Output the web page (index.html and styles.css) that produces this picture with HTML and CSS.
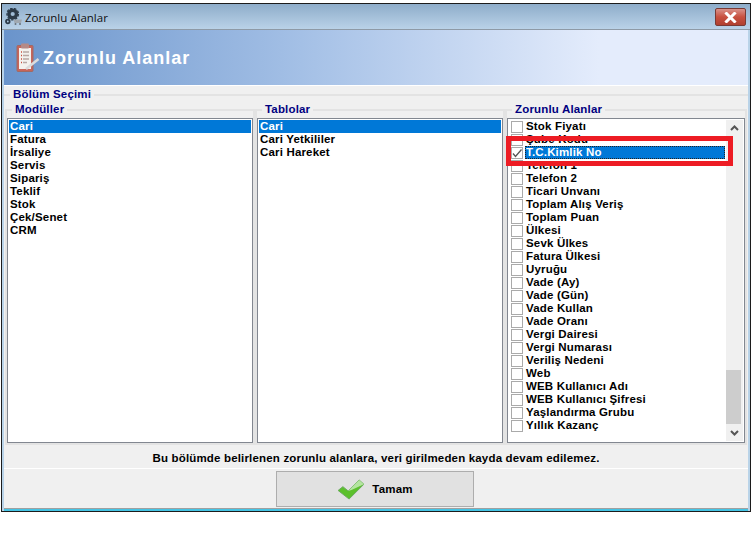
FILE: index.html
```html
<!DOCTYPE html>
<html lang="tr">
<head>
    <meta charset="UTF-8">
    <title>Zorunlu Alanlar</title>
    <link rel="stylesheet" href="styles.css">
</head>
<body>
    <div class="window">
        <div class="titlebar">
            <svg class="app-icon" width="19" height="19" viewBox="0 0 19 19">
                <circle cx="8.700" cy="6" r="3.800" fill="none" stroke="#2c3a48" stroke-width="3.400"/>
                <circle cx="8.700" cy="6" r="5.800" fill="none" stroke="#2c3a48" stroke-width="1.200" stroke-dasharray="2.500 1.500"/>
                <circle cx="3.800" cy="13.500" r="1.800" fill="none" stroke="#2c3a48" stroke-width="1.800"/>
                <path d="M9.500 11.500 H18 L17 15 H10.500 Z" fill="#a0a8b0"/>
                <circle cx="11.500" cy="16" r="1" fill="#68727c"/>
                <circle cx="16" cy="16" r="1" fill="#68727c"/>
            </svg>
            <span class="title-text">Zorunlu Alanlar</span>
            <div class="close-btn">
                <svg width="15" height="11" viewBox="0 0 15 11">
                    <path d="M3.500 1.500 L11.500 9.500 M11.500 1.500 L3.500 9.500" stroke="#fff" stroke-width="3" stroke-linecap="square"/>
                </svg>
            </div>
        </div>
        <div class="banner">
            <svg class="banner-icon" width="24" height="30" viewBox="0 0 24 30">
                <rect x="1" y="2.500" width="16" height="26" rx="1" fill="#c8655a" stroke="#a06a64"/>
                <rect x="3" y="5" width="12" height="21" fill="#f4f2ee"/>
                <rect x="5" y="0.500" width="8" height="5" rx="1" fill="#b58a86"/>
                <path d="M7 9 H13 M7 12.500 H13 M7 16 H13 M7 19.500 H11" stroke="#b8a8a4" stroke-width="1.300"/>
                <path d="M5 9 H6 M5 12.500 H6 M5 16 H6 M5 19.500 H6" stroke="#c8503f" stroke-width="1.300"/>
                <path d="M10 26 L22.500 16" stroke="#dcdcdc" stroke-width="2.600"/>
            </svg>
            <h1>Zorunlu Alanlar</h1>
        </div>
        <div class="content">
            <fieldset class="group outer">
                <legend>Bölüm Seçimi</legend>
                <div class="columns">
                    <fieldset class="group col">
                        <legend>Modüller</legend>
                        <ul class="list">
                            <li class="selected">Cari</li>
                            <li>Fatura</li>
                            <li>İrsaliye</li>
                            <li>Servis</li>
                            <li>Sipariş</li>
                            <li>Teklif</li>
                            <li>Stok</li>
                            <li>Çek/Senet</li>
                            <li>CRM</li>
                        </ul>
                    </fieldset>
                    <fieldset class="group col">
                        <legend>Tablolar</legend>
                        <ul class="list">
                            <li class="selected">Cari</li>
                            <li>Cari Yetkililer</li>
                            <li>Cari Hareket</li>
                        </ul>
                    </fieldset>
                    <fieldset class="group col">
                        <legend>Zorunlu Alanlar</legend>
                        <div class="checklist">
                            <ul class="check-items">
                                <li><span class="box"></span><span>Stok Fiyatı</span></li>
                                <li><span class="box"></span><span>Şube Kodu</span></li>
                                <li class="current"><span class="box checked"><svg width="12" height="12" viewBox="0 0 12 12"><path d="M2 6.500 L4.500 9.500 L10.500 2.500" fill="none" stroke="#555" stroke-width="1.300"/></svg></span><span class="item-label">T.C.Kimlik No</span></li>
                                <li><span class="box"></span><span>Telefon 1</span></li>
                                <li><span class="box"></span><span>Telefon 2</span></li>
                                <li><span class="box"></span><span>Ticari Unvanı</span></li>
                                <li><span class="box"></span><span>Toplam Alış Veriş</span></li>
                                <li><span class="box"></span><span>Toplam Puan</span></li>
                                <li><span class="box"></span><span>Ülkesi</span></li>
                                <li><span class="box"></span><span>Sevk Ülkes</span></li>
                                <li><span class="box"></span><span>Fatura Ülkesi</span></li>
                                <li><span class="box"></span><span>Uyruğu</span></li>
                                <li><span class="box"></span><span>Vade (Ay)</span></li>
                                <li><span class="box"></span><span>Vade (Gün)</span></li>
                                <li><span class="box"></span><span>Vade Kullan</span></li>
                                <li><span class="box"></span><span>Vade Oranı</span></li>
                                <li><span class="box"></span><span>Vergi Dairesi</span></li>
                                <li><span class="box"></span><span>Vergi Numarası</span></li>
                                <li><span class="box"></span><span>Veriliş Nedeni</span></li>
                                <li><span class="box"></span><span>Web</span></li>
                                <li><span class="box"></span><span>WEB Kullanıcı Adı</span></li>
                                <li><span class="box"></span><span>WEB Kullanıcı Şifresi</span></li>
                                <li><span class="box"></span><span>Yaşlandırma Grubu</span></li>
                                <li><span class="box"></span><span>Yıllık Kazanç</span></li>
                            </ul>
                            <div class="scrollbar">
                                <svg width="17" height="17" viewBox="0 0 17 17"><path d="M5 10 L8.500 6.500 L12 10" fill="none" stroke="#555" stroke-width="2"/></svg>
                                <div class="track"><div class="thumb"></div></div>
                                <svg width="17" height="17" viewBox="0 0 17 17"><path d="M5 7 L8.500 10.500 L12 7" fill="none" stroke="#555" stroke-width="2"/></svg>
                            </div>
                            <div class="highlight"></div>
                        </div>
                    </fieldset>
                </div>
            </fieldset>
            <p class="note">Bu bölümde belirlenen zorunlu alanlara, veri girilmeden kayda devam edilemez.</p>
            <div class="footer">
                <button class="ok-btn">
                    <svg width="28" height="21" viewBox="0 0 29 22">
                        <path d="M1 12 L6 8 L11.500 12.500 L23 1 L28 5.500 L12.500 21 Z" fill="#5cc02c" stroke="#6aa860"/>
                        <path d="M11.500 12.500 L23 1 L28 5.500 L15 11.500 Z" fill="#b4e4a0"/>
                    </svg>
                    <span>Tamam</span>
                </button>
            </div>
        </div>
    </div>
</body>
</html>
```
FILE: styles.css
```css
body {
    margin: 0;
    background-color: #fff;
    font-family: "Liberation Sans", sans-serif;
    font-size: 11.500px;
    letter-spacing: 0.170px;
    color: #000;
}
ul {
    list-style: none;
    margin: 0;
    padding: 0;
}
.window {
    width: 750px;
    height: 509px;
    margin: 3px 0 0 1px;
    box-sizing: border-box;
    border: 1px solid #1c1c1c;
    background-color: #b9d3e8;
    display: flex;
    flex-direction: column;
}
.titlebar {
    height: 23px;
    flex-shrink: 0;
    display: flex;
    align-items: center;
    background: linear-gradient(to bottom, #8eadca, #bad2e8);
    border-bottom: 1px solid #8e9aa6;
    padding: 2px 0 0 2px;
}
.app-icon {
    margin-right: 2px;
}
.title-text {
    font-family: "Open Sans", sans-serif;
    font-size: 11.500px;
    letter-spacing: 0;
    color: #111;
}
.close-btn {
    align-self: flex-start;
    margin-left: auto;
    margin-right: 4px;
    margin-top: 2px;
    width: 31px;
    height: 18px;
    box-sizing: border-box;
    border: 1px solid #7a3a34;
    border-radius: 2px;
    background: linear-gradient(to bottom, #d9928a, #c8503f 50%, #b04030);
    display: flex;
    align-items: center;
    justify-content: center;
}
.banner {
    height: 55px;
    flex-shrink: 0;
    margin: 0 2px 0 2px;
    display: flex;
    align-items: center;
    background: linear-gradient(to right, #6a94cb, #a4c0e6 40%, #e4ecfc 80%);
    border-bottom: 1px solid #fff;
}
.banner-icon {
    margin-left: 12px;
}
.banner h1 {
    margin: 2px 0 0 3px;
    font-size: 18px;
    letter-spacing: 1px;
    font-weight: bold;
    color: #fff;
}
.content {
    flex: 1;
    margin: 0 2px 0 2px;
    background-color: #f0f0f0;
    display: flex;
    flex-direction: column;
    border-bottom: 2px solid #45c4e4;
}
.group {
    margin: 0;
    padding: 0;
    border: 2px solid #e3e3e3;
    min-width: 0;
}
.group legend {
    padding: 0 3px;
    font-weight: bold;
    color: #000080;
    line-height: 13px;
}
.outer {
    height: 358px;
    flex-shrink: 0;
    margin-top: 2px;
    box-sizing: border-box;
    border-left: none;
    border-right: none;
    border-bottom: none;
}
.outer > legend {
    margin-left: 6px;
}
.columns {
    display: grid;
    grid-template-columns: 250px 250px 242px;
    margin-left: 1px;
    padding-top: 2px;
}
.col {
    box-sizing: border-box;
    padding-top: 2px;
}
.col > legend {
    margin-left: 5px;
}
.list {
    height: 325px;
    box-sizing: border-box;
    border: 1px solid #828790;
    background-color: #fff;
    padding: 1px;
    overflow: hidden;
}
.list li {
    height: 13px;
    line-height: 13px;
    font-weight: bold;
    padding-left: 1px;
    white-space: nowrap;
}
.list li.selected {
    background-color: #0078d7;
    color: #fff;
}
.checklist {
    position: relative;
    height: 325px;
    box-sizing: border-box;
    border: 1px solid #828790;
    background-color: #fff;
    padding: 1px;
    display: flex;
}
.check-items {
    flex: 1;
}
.check-items li {
    height: 13px;
    line-height: 13px;
    font-weight: bold;
    display: flex;
    align-items: center;
    white-space: nowrap;
    padding-left: 2px;
}
.check-items li span + span {
    padding-left: 1px;
}
.box {
    width: 10px;
    height: 10px;
    flex-shrink: 0;
    border: 1px solid #aaa;
    background-color: #fff;
    margin-right: 2px;
    position: relative;
}
.box svg {
    display: block;
    margin: -1px;
}
.item-label {
    flex: 1;
    background-color: #0078d7;
    color: #fff;
    outline: 1px dotted #222;
    outline-offset: -1px;
    height: 13px;
    margin-right: 1px;
}
.scrollbar {
    width: 17px;
    flex-shrink: 0;
    background-color: #f0f0f0;
    display: flex;
    flex-direction: column;
}
.scrollbar svg {
    flex-shrink: 0;
    display: block;
}
.track {
    flex: 1;
    display: flex;
    flex-direction: column;
    justify-content: flex-end;
}
.thumb {
    height: 54px;
    width: 15px;
    background-color: #cdcdcd;
}
.highlight {
    position: absolute;
    left: -2px;
    top: 17px;
    width: 227px;
    height: 30px;
    box-sizing: border-box;
    border: 5px solid #ed1c24;
}
.note {
    margin: 0;
    height: 22px;
    flex-shrink: 0;
    line-height: 25px;
    text-align: center;
    font-weight: bold;
}
.footer {
    flex: 1;
    border-top: 1px solid #fff;
    display: flex;
    justify-content: center;
    padding-top: 2px;
    border-bottom: 1px solid #a0a0a0;
}
.ok-btn {
    width: 198px;
    height: 36px;
    box-sizing: border-box;
    margin-right: 2px;
    border: 1px solid #adadad;
    background-color: #e1e1e1;
    font-family: inherit;
    font-size: 11.500px;
    letter-spacing: inherit;
    font-weight: bold;
    display: flex;
    align-items: center;
    justify-content: center;
    gap: 7px;
    padding: 0;
}
```
